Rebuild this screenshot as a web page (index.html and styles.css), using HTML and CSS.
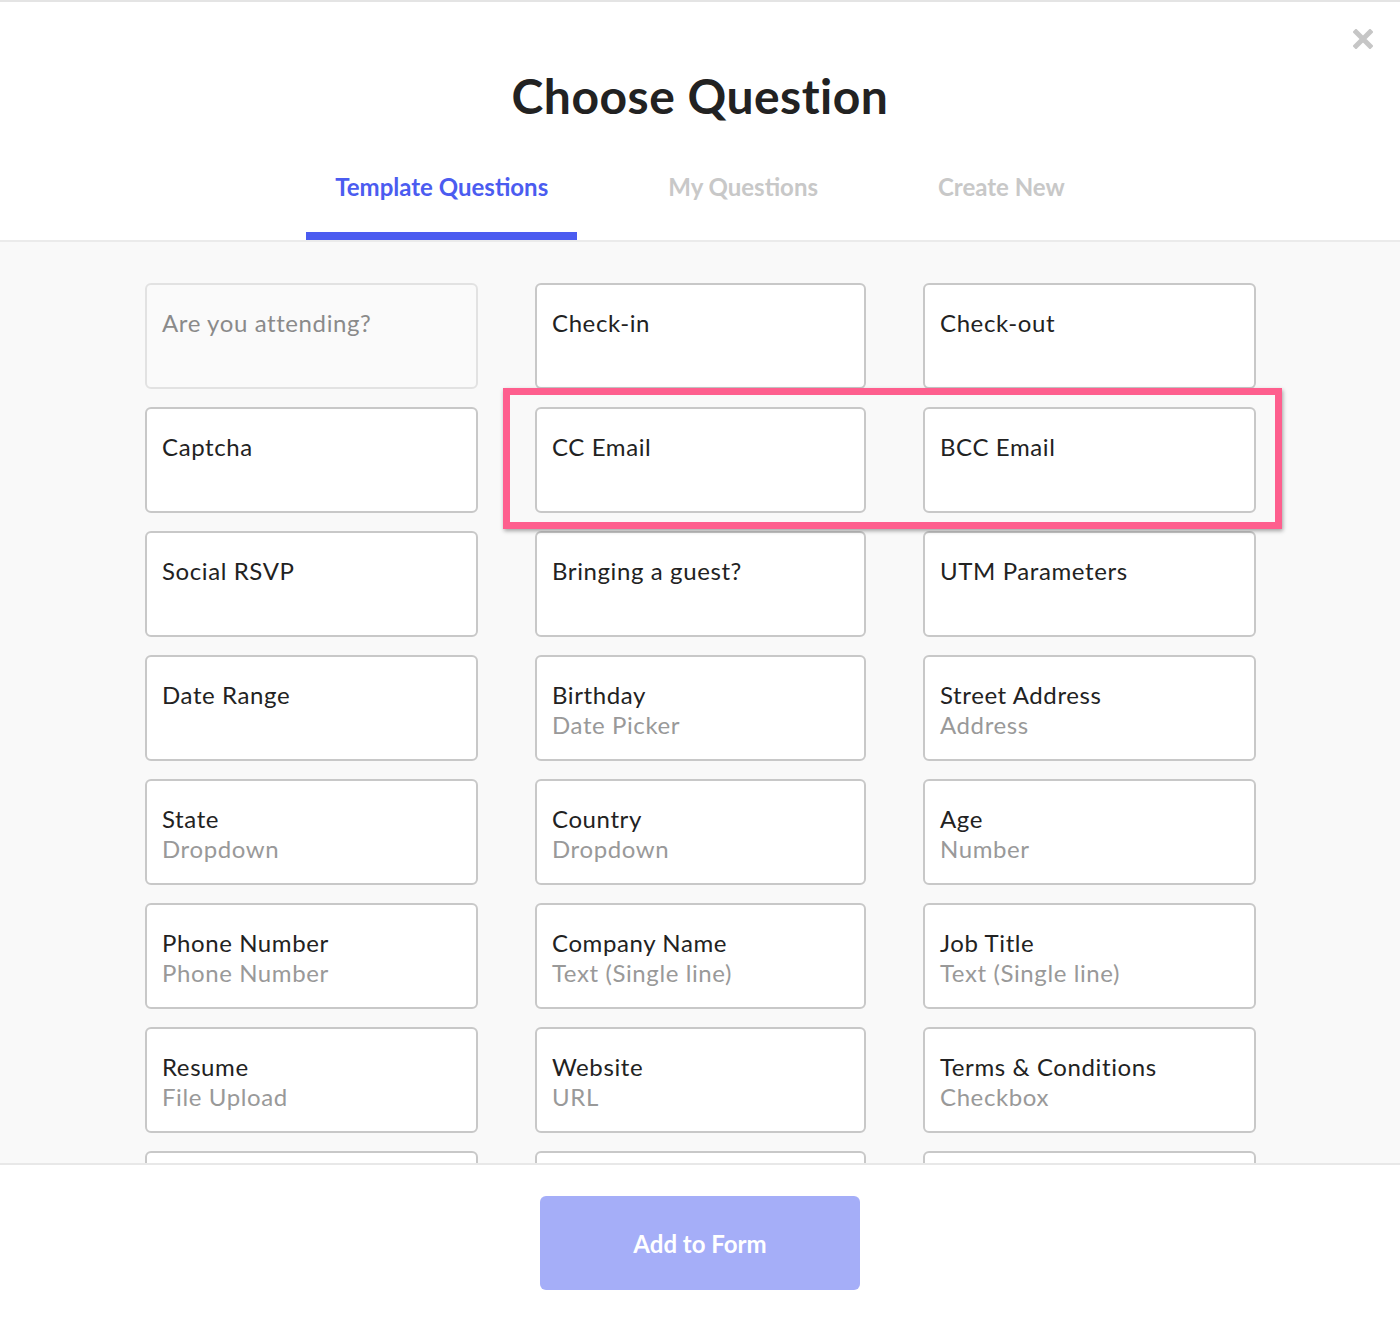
FILE: index.html
```html
<!DOCTYPE html>
<html lang="en">
<head>
<meta charset="utf-8">
<title>Choose Question</title>
<link rel="stylesheet" href="styles.css">
</head>
<body>
<div class="modal">
  <header class="header">
    <button class="close" aria-label="Close">
      <svg width="20" height="20" viewBox="0 0 20 20"><path d="M3 3 L17 17 M17 3 L3 17" stroke="#c6c6c6" stroke-width="5" stroke-linecap="square"/></svg>
    </button>
    <h1 class="title">Choose Question</h1>
    <nav class="tabs">
      <a class="tab active">Template Questions</a>
      <a class="tab">My Questions</a>
      <a class="tab">Create New</a>
    </nav>
  </header>
  <main class="content">
    <div class="grid">
      <div class="card disabled"><div class="name">Are you attending?</div></div>
      <div class="card"><div class="name">Check-in</div></div>
      <div class="card"><div class="name">Check-out</div></div>

      <div class="card"><div class="name">Captcha</div></div>
      <div class="card"><div class="name">CC Email</div></div>
      <div class="card"><div class="name">BCC Email</div></div>

      <div class="card"><div class="name">Social RSVP</div></div>
      <div class="card"><div class="name">Bringing a guest?</div></div>
      <div class="card"><div class="name">UTM Parameters</div></div>

      <div class="card"><div class="name">Date Range</div></div>
      <div class="card"><div class="name">Birthday</div><div class="type">Date Picker</div></div>
      <div class="card"><div class="name">Street Address</div><div class="type">Address</div></div>

      <div class="card"><div class="name">State</div><div class="type">Dropdown</div></div>
      <div class="card"><div class="name">Country</div><div class="type">Dropdown</div></div>
      <div class="card"><div class="name">Age</div><div class="type">Number</div></div>

      <div class="card"><div class="name">Phone Number</div><div class="type">Phone Number</div></div>
      <div class="card"><div class="name">Company Name</div><div class="type">Text (Single line)</div></div>
      <div class="card"><div class="name">Job Title</div><div class="type">Text (Single line)</div></div>

      <div class="card"><div class="name">Resume</div><div class="type">File Upload</div></div>
      <div class="card"><div class="name">Website</div><div class="type">URL</div></div>
      <div class="card"><div class="name">Terms &amp; Conditions</div><div class="type">Checkbox</div></div>

      <div class="card"><div class="name">&nbsp;</div></div>
      <div class="card"><div class="name">&nbsp;</div></div>
      <div class="card"><div class="name">&nbsp;</div></div>
    </div>
    <div class="highlight"></div>
  </main>
  <footer class="footer">
    <button class="add">Add to Form</button>
  </footer>
</div>
</body>
</html>
```

FILE: styles.css
```css
* { box-sizing: border-box; }
html, body { margin: 0; padding: 0; background: #ffffff; }
body { font-family: Lato, "Open Sans", "Liberation Sans", sans-serif; color: #222222; }

.modal {
  width: 1400px;
  height: 1320px;
  display: flex;
  flex-direction: column;
  overflow: hidden;
}

.header {
  position: relative;
  border-top: 2px solid #e4e4e4;
  border-bottom: 2px solid #ebebeb;
  padding-top: 66px;
  display: flex;
  flex-direction: column;
  align-items: center;
  background: #ffffff;
}

.close {
  position: absolute;
  top: 27px;
  right: 27px;
  width: 20px;
  height: 20px;
  padding: 0;
  border: 0;
  background: none;
  display: flex;
}

.title {
  margin: 0;
  font-size: 48px;
  line-height: 55px;
  font-weight: 700;
  letter-spacing: 0.5px;
  color: #222222;
}

.tabs {
  display: flex;
  gap: 62px;
  margin-top: 50px;
}

.tab {
  padding: 0 29px 31px;
  font-size: 24px;
  line-height: 28px;
  font-weight: 700;
  color: #c8c8c8;
  border-bottom: 8px solid transparent;
}

.tab.active {
  color: #4b5cf0;
  border-bottom-color: #4b5cf0;
}

.content {
  position: relative;
  flex: 1;
  background: #f9f9f9;
  overflow: hidden;
  padding: 41px 0 0 145px;
}

.grid {
  display: grid;
  grid-template-columns: 333px 331px 333px;
  grid-auto-rows: 106px;
  column-gap: 57px;
  row-gap: 18px;
}

.card {
  background: #ffffff;
  border: 2px solid #c8c8c8;
  border-radius: 6px;
  padding: 23px 15px 0;
  font-size: 24px;
  line-height: 30px;
  letter-spacing: 0.6px;
}

.card .name { color: #222222; }
.card .type { color: #999999; }

.card.disabled {
  background: #fafafa;
  border-color: #e2e2e2;
}
.card.disabled .name { color: #8a8a8a; }

.highlight {
  position: absolute;
  left: 503px;
  top: 146px;
  width: 779px;
  height: 141px;
  border: 7px solid #fe5f8e;
  box-shadow: 1px 2px 4px rgba(0, 0, 0, 0.35);
  pointer-events: none;
}

.footer {
  height: 157px;
  border-top: 2px solid #e8e8e8;
  background: #ffffff;
  display: flex;
  justify-content: center;
  padding-top: 31px;
}

.add {
  width: 320px;
  height: 94px;
  border: 0;
  border-radius: 6px;
  background: #a5aef8;
  color: #ffffff;
  font-family: Lato, "Open Sans", "Liberation Sans", sans-serif;
  font-size: 24px;
  font-weight: 700;
}
```
